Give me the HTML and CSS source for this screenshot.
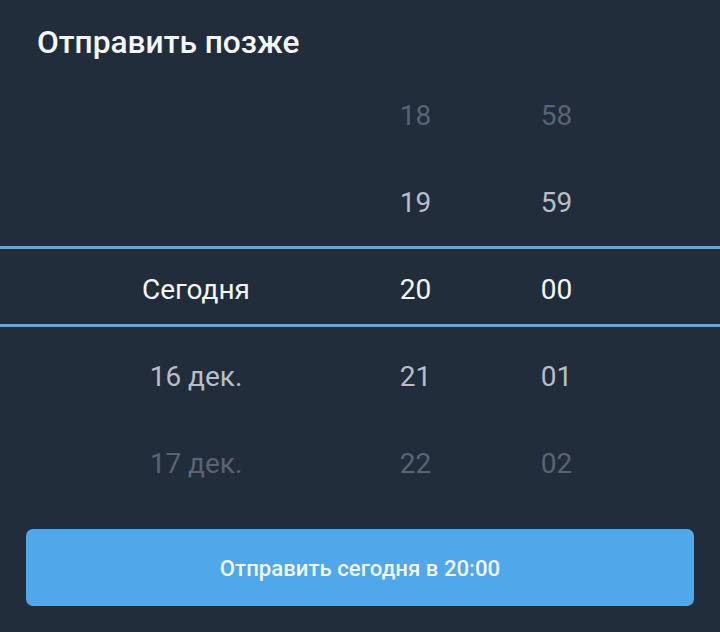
FILE: index.html
```html
<!DOCTYPE html>
<html lang="ru">
<head>
    <meta charset="UTF-8">
    <meta name="viewport" content="width=device-width, initial-scale=1.0">
    <title>Отправить позже</title>
    <link rel="stylesheet" href="styles.css">
</head>
<body>

    <div class="sheet">
        <h1 class="title">Отправить позже</h1>

        <div class="picker">
            <div class="band"></div>

            <div class="wheel wheel-date">
                <div class="item"></div>
                <div class="item"></div>
                <div class="item current">Сегодня</div>
                <div class="item near">16 дек.</div>
                <div class="item far">17 дек.</div>
            </div>

            <div class="wheel wheel-hour">
                <div class="item far">18</div>
                <div class="item near">19</div>
                <div class="item current">20</div>
                <div class="item near">21</div>
                <div class="item far">22</div>
            </div>

            <div class="wheel wheel-min">
                <div class="item far">58</div>
                <div class="item near">59</div>
                <div class="item current">00</div>
                <div class="item near">01</div>
                <div class="item far">02</div>
            </div>
        </div>

        <button class="send" type="button">Отправить сегодня в 20:00</button>
    </div>

</body>
</html>
```

FILE: styles.css
```css
body { margin: 0; background-color: #222d3b; font-family: Roboto, "Noto Sans", sans-serif; }
.sheet { width: 720px; height: 632px; box-sizing: border-box; padding-top: 25px; }
.title { margin: 0 0 0 37px; font-size: 31.7px; font-weight: 500; line-height: 36px; color: #f4f6f8; }

.picker { position: relative; display: flex; margin-top: 11px; }
.band { position: absolute; left: 0; right: 0; top: 174px; height: 75px; border-top: 3px solid #60a8df; border-bottom: 3px solid #60a8df; }
.wheel { display: flex; flex-direction: column; }
.wheel-date { width: 392px; }
.wheel-hour { width: 47px; }
.wheel-min { width: 47px; margin-left: 94px; }
.item { height: 87px; line-height: 87px; text-align: center; white-space: nowrap; font-size: 28px; color: #f4f6f8; }
.item.near { color: #b7bec8; }
.item.far { color: #596373; }

.send { display: block; width: 668px; height: 77px; margin: 22px 0 0 26px; border: none; border-radius: 7px; background-color: #50a7ea; color: #f2f7fc; font-family: Roboto, sans-serif; font-size: 22.2px; font-weight: 500; cursor: pointer; }
```
